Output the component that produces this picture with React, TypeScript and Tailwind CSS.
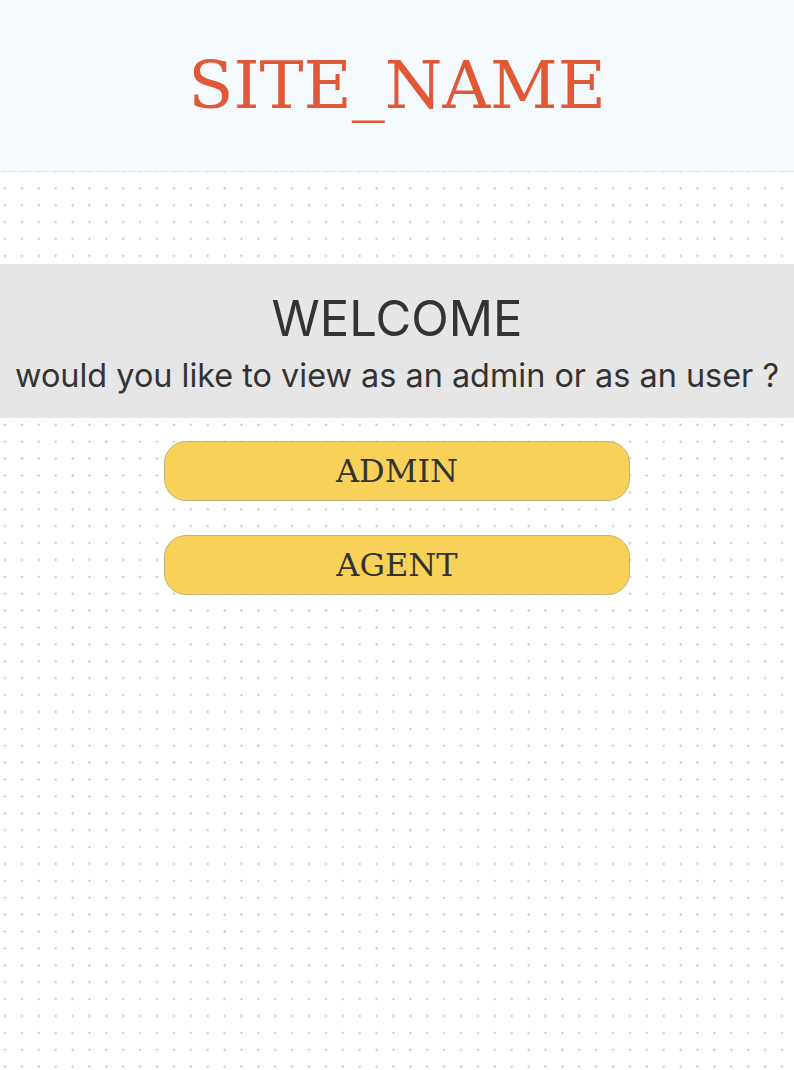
export default function App() {
  return (
    <div className="min-h-[1070px] bg-white bg-[radial-gradient(circle,#cfcfcf_1px,transparent_1.3px)] bg-[length:16.9px_16.9px] bg-[position:-3.4px_-5.9px] font-['Inter',sans-serif] text-[#333]">
      <header className="flex h-[172px] items-center justify-center border-b border-[#d6e8f7] bg-[#f5faff]">
        <h1 className="font-['DejaVu_Serif',serif] text-[66px] leading-none text-[#e15836]">SITE_NAME</h1>
      </header>
      <div className="h-[92px]" />
      <section className="flex h-[154px] flex-col items-center bg-[#e6e6e6] pt-[25px]">
        <h2 className="text-[49px] leading-[60px]">WELCOME</h2>
        <p className="mt-[7px] text-[32.4px] leading-[40px]">would you like to view as an admin or as an user ?</p>
      </section>
      <div className="mt-[23px] flex flex-col items-center gap-[34px]">
        <button className="h-[60px] w-[466px] rounded-[22px] border border-[#c4b27a] bg-[#f8d159] font-['DejaVu_Serif',serif] text-[32px] text-[#333]">
          ADMIN
        </button>
        <button className="h-[60px] w-[466px] rounded-[22px] border border-[#c4b27a] bg-[#f8d159] font-['DejaVu_Serif',serif] text-[32px] text-[#333]">
          AGENT
        </button>
      </div>
    </div>
  );
}
